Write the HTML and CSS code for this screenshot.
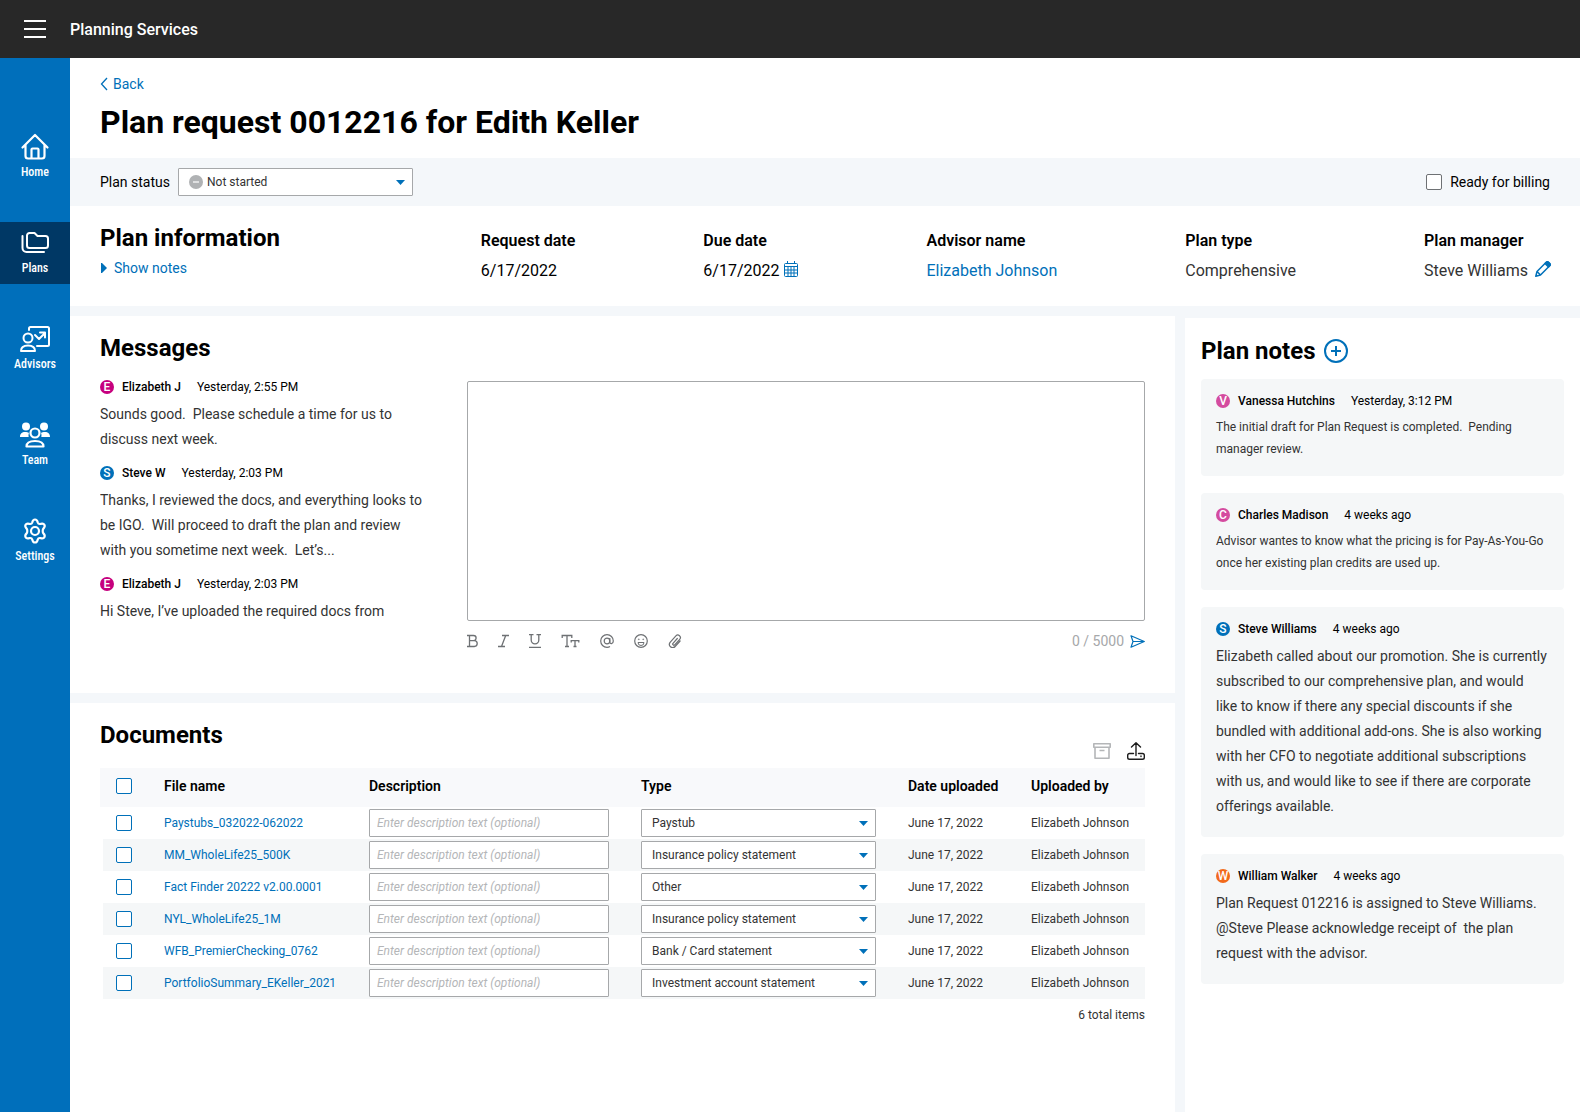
FILE: index.html
```html
<!DOCTYPE html>
<html lang="en">

<head>
  <meta charset="UTF-8" />
  <meta name="viewport" content="width=device-width, initial-scale=1.0" />
  <title>Planning Services</title>
  <link rel="stylesheet" href="styles.css">
</head>

<body>
  <header class="topbar">
    <button class="icon-btn menu-btn" type="button" aria-label="Menu">
      <svg width="22" height="18" viewBox="0 0 22 18" fill="none" stroke="#fff" stroke-width="2"><path d="M0 1h22M0 9h22M0 17h22" /></svg>
    </button>
    <span class="app-name">Planning Services</span>
  </header>

  <div class="shell">
    <nav class="sidebar">
      <a class="nav-item" href="#">
        <svg width="30" height="28" viewBox="0 0 30 28" fill="none" stroke="#fff" stroke-width="2.200" stroke-linecap="round" stroke-linejoin="round"><path d="M2.500 14.500L15 2l12.500 12.500M5.500 12v11a2.500 2.500 0 0 0 2.500 2.500h14a2.500 2.500 0 0 0 2.500-2.500V12M11.500 25.500v-9a1 1 0 0 1 1-1h5a1 1 0 0 1 1 1v9" /></svg>
        Home
      </a>
      <a class="nav-item active" href="#">
        <svg width="30" height="28" viewBox="0 0 30 28" fill="none" stroke="#fff" stroke-width="2" stroke-linecap="round" stroke-linejoin="round"><path d="M9.500 4h5l3 3h8a2.500 2.500 0 0 1 2.500 2.500v7a2.500 2.500 0 0 1-2.500 2.500h-16A2.500 2.500 0 0 1 7 16.500v-10A2.500 2.500 0 0 1 9.500 4zM2.500 7v12a4 4 0 0 0 4 4H24" /></svg>
        Plans
      </a>
      <a class="nav-item" href="#">
        <svg width="32" height="28" viewBox="0 0 32 28" fill="none" stroke="#fff" stroke-width="2" stroke-linecap="round" stroke-linejoin="round"><path d="M10 5V3.500A1.500 1.500 0 0 1 11.500 2h17A1.500 1.500 0 0 1 30 3.500v16a1.500 1.500 0 0 1-1.500 1.500H18M16 10l4 4 6-6M21 7.500h5v5" /><circle cx="9" cy="13" r="4.500" /><path d="M2 26c0-4 2.500-5.500 7-5.500s7 1.500 7 5.500z" /></svg>
        Advisors
      </a>
      <a class="nav-item" href="#">
        <svg width="32" height="28" viewBox="0 0 32 28" fill="none" stroke="#fff" stroke-width="2.200" stroke-linejoin="round"><g fill="#fff" stroke="none"><circle cx="7" cy="5.500" r="4" /><circle cx="25" cy="5.500" r="4" /><path d="M1 16c0-3.500 2-5 5-5 1.800 0 3 .3 4 1-.6 1.300-.6 2.700-.3 4zM31 16c0-3.500-2-5-5-5-1.800 0-3 .3-4 1 .6 1.300.6 2.700.3 4z" /></g><circle cx="16" cy="12" r="4.500" /><path d="M7.500 25.500c0-4 3-5.500 8.500-5.500s8.500 1.500 8.500 5.500z" /></svg>
        Team
      </a>
      <a class="nav-item" href="#">
        <svg width="28" height="28" viewBox="0 0 28 28" fill="none" stroke="#fff" stroke-width="2.200" stroke-linejoin="round"><circle cx="14" cy="14" r="4" /><path d="M11.300 5.300C11.800 3 12.500 2.500 14 2.500s2.200.5 2.700 2.800c.4 1.200 1.600 1.900 2.900 1.600 2.200-.7 3.100-.4 3.800.9s.7 2.100-1 3.800c-.9.900-.9 3.900 0 4.800 1.700 1.700 1.700 2.500 1 3.800s-1.600 1.600-3.800.9c-1.300-.3-2.500.4-2.900 1.600-.5 2.300-1.200 2.800-2.700 2.800s-2.200-.5-2.700-2.800c-.4-1.200-1.600-1.900-2.900-1.600-2.200.7-3.100.4-3.800-.9s-.7-2.100 1-3.800c.9-.9.9-3.900 0-4.800-1.700-1.700-1.700-2.500-1-3.800s1.600-1.600 3.800-.9c1.300.3 2.500-.4 2.900-1.600z" /></svg>
        Settings
      </a>
    </nav>

    <main class="main">
      <div class="page-head">
        <a class="back" href="#">
          <svg width="8" height="14" viewBox="0 0 8 14" fill="none" stroke="#0070b9" stroke-width="1.300"><path d="M7 1L1.500 7 7 13" /></svg>
          Back
        </a>
        <h1>Plan request 0012216 for Edith Keller</h1>
      </div>

      <div class="status-bar">
        <label for="plan-status">Plan status</label>
        <span class="select status-select">
          <svg class="status-icon" width="14" height="14" viewBox="0 0 14 14"><circle cx="7" cy="7" r="7" fill="#b0b2b4" /><path d="M4 7h6" stroke="#fff" stroke-width="1.200" /></svg>
          <select id="plan-status"><option>Not started</option></select>
        </span>
        <label class="billing"><input class="check check-dark" type="checkbox">Ready for billing</label>
      </div>

      <section class="plan-info">
        <div>
          <h2>Plan information</h2>
          <a class="show-notes" href="#">
            <svg width="6" height="10" viewBox="0 0 6 10"><path d="M0 0h1l5 5-5 5H0z" fill="#0070b9" /></svg>
            Show notes
          </a>
        </div>
        <dl class="fields">
          <div><dt>Request date</dt><dd>6/17/2022</dd></div>
          <div>
            <dt>Due date</dt>
            <dd>6/17/2022
              <button class="icon-btn field-btn" type="button" aria-label="Pick due date">
                <svg width="14" height="16" viewBox="0 0 14 16" fill="none" stroke="#0070b9"><path d="M1.500 2.500h11a1 1 0 0 1 1 1v11a1 1 0 0 1-1 1h-11a1 1 0 0 1-1-1v-11a1 1 0 0 1 1-1zM3.500 0v3M10.500 0v3M.5 5.500h13M.5 9h13M.5 12h13M4 5.500v10M7 5.500v10M10 5.500v10" /></svg>
              </button>
            </dd>
          </div>
          <div><dt>Advisor name</dt><dd><a href="#">Elizabeth Johnson</a></dd></div>
          <div><dt>Plan type</dt><dd class="soft">Comprehensive</dd></div>
          <div>
            <dt>Plan manager</dt>
            <dd class="soft">Steve Williams
              <button class="icon-btn field-btn pencil" type="button" aria-label="Edit plan manager">
                <svg width="16" height="16" viewBox="0 0 16 16" fill="none" stroke="#0070b9" stroke-width="1.500" stroke-linejoin="round"><path d="M.8 15.200l1.200-4.700L11.200 1.300a1.600 1.600 0 0 1 2.200 0l1.300 1.300a1.600 1.600 0 0 1 0 2.200L5.500 14zM2 10.500L5.500 14" /><path d="M10 2.500l1.700-1.500h1.500L15 2.800v1.500L13.500 6z" fill="#0070b9" /></svg>
              </button>
            </dd>
          </div>
        </dl>
      </section>

      <div class="columns">
        <div class="left-col">
          <section class="panel messages">
            <h2>Messages</h2>
            <div class="messages-body">
              <div class="message-list">
                <article class="message">
                  <div class="meta"><span class="avatar magenta">E</span><b>Elizabeth J</b><span>Yesterday, 2:55 PM</span></div>
                  <p>Sounds good.&nbsp; Please schedule a time for us to discuss next week.</p>
                </article>
                <article class="message">
                  <div class="meta"><span class="avatar blue">S</span><b>Steve W</b><span>Yesterday, 2:03 PM</span></div>
                  <p>Thanks, I reviewed the docs, and everything looks to be IGO.&nbsp; Will proceed to draft the plan and review with you sometime next week.&nbsp; Let’s...</p>
                </article>
                <article class="message">
                  <div class="meta"><span class="avatar magenta">E</span><b>Elizabeth J</b><span>Yesterday, 2:03 PM</span></div>
                  <p>Hi Steve, I’ve uploaded the required docs from</p>
                </article>
              </div>

              <div class="compose">
                <textarea aria-label="Message"></textarea>
                <div class="toolbar">
                  <button class="icon-btn" type="button" aria-label="Bold">
                    <svg width="11" height="14" viewBox="0 0 11 14" fill="none" stroke="#6e7174" stroke-width="1.300"><path d="M0 1.500h6.500a2.600 2.600 0 0 1 0 5.200H2.500M6.500 6.700h.8a2.900 2.900 0 0 1 0 5.800H0M2.500 1.500v11" /></svg>
                  </button>
                  <button class="icon-btn" type="button" aria-label="Italic">
                    <svg width="11" height="14" viewBox="0 0 11 14" fill="none" stroke="#6e7174" stroke-width="1.300"><path d="M4 1.500h7M0 12.500h7M7.700 1.500l-4.200 11" /></svg>
                  </button>
                  <button class="icon-btn" type="button" aria-label="Underline">
                    <svg width="12" height="14" viewBox="0 0 12 14" fill="none" stroke="#6e7174" stroke-width="1.300"><path d="M0 .7h4.500M7.500.7H12M2.200.7V6a3.800 3.800 0 0 0 7.600 0V.7M0 13.300h12" /></svg>
                  </button>
                  <button class="icon-btn" type="button" aria-label="Text size">
                    <svg width="19" height="14" viewBox="0 0 19 14" fill="none" stroke="#6e7174" stroke-width="1.300"><path d="M1.200 4V1.500h9.600V4M6 1.500v11M4 12.500h4M10.200 8.500V6.700h7.600v1.800M14 6.700v5.800M12.500 12.500h3" /></svg>
                  </button>
                  <button class="icon-btn" type="button" aria-label="Mention">
                    <svg width="14" height="14" viewBox="0 0 14 14" fill="none" stroke="#6e7174" stroke-width="1.200"><circle cx="7" cy="7" r="2.800" /><path d="M9.800 4v4.200c0 2 3.500 2 3.500-1.200A6.300 6.300 0 1 0 7 13.300c1.300 0 2-.2 3-.8" /></svg>
                  </button>
                  <button class="icon-btn" type="button" aria-label="Emoji">
                    <svg width="14" height="14" viewBox="0 0 14 14" fill="none" stroke="#6e7174" stroke-width="1.200"><circle cx="7" cy="7" r="6.300" /><path d="M4 8.500h6a3 3 0 0 1-6 0z" stroke-width="1" /><circle cx="4.800" cy="5.300" r=".6" fill="#6e7174" stroke-width=".3" /><circle cx="9.200" cy="5.300" r=".6" fill="#6e7174" stroke-width=".3" /></svg>
                  </button>
                  <button class="icon-btn" type="button" aria-label="Attach">
                    <svg width="14" height="14" viewBox="0 0 14 14" fill="none" stroke="#6e7174" stroke-width="1.200" stroke-linecap="round"><path d="M9.300 4.500L5 9.300a1.100 1.100 0 0 0 1.700 1.500l5-5.500a2.500 2.500 0 0 0-3.800-3.400L2.300 8.200a3.200 3.200 0 0 0 4.800 4.300l5-5.500" /></svg>
                  </button>
                  <span class="counter">0 / 5000</span>
                  <button class="icon-btn send" type="button" aria-label="Send">
                    <svg width="15" height="13" viewBox="0 0 15 13" fill="none" stroke="#0070b9" stroke-width="1.200" stroke-linejoin="round"><path d="M1 .8l13.300 5.700L1 12.200 3 6.500zM3 6.500h11" /></svg>
                  </button>
                </div>
              </div>
            </div>
          </section>

          <section class="panel documents">
            <div class="documents-head">
              <h2>Documents</h2>
              <div class="actions">
                <button class="icon-btn" type="button" aria-label="Archive" disabled>
                  <svg width="18" height="18" viewBox="0 0 18 18" fill="none" stroke="#b4b6b8" stroke-width="1.600" stroke-linejoin="round"><path d="M.8 1.800h16.400v3.400H.8zM2 5.200v11h14v-11M6.500 8.500h5" /></svg>
                </button>
                <button class="icon-btn" type="button" aria-label="Upload">
                  <svg width="18" height="18" viewBox="0 0 18 18" fill="none" stroke="#1c1c1c" stroke-width="1.400" stroke-linecap="round" stroke-linejoin="round"><path d="M9 13.500V.8M4.500 5L9 .8 13.500 5M6.500 11.500h-4a1.800 1.800 0 0 0-1.800 1.800v2.200a1.800 1.800 0 0 0 1.800 1.800h13a1.800 1.800 0 0 0 1.800-1.800v-2.200a1.800 1.800 0 0 0-1.800-1.800h-4M14 14v.5" /></svg>
                </button>
              </div>
            </div>

            <table>
              <colgroup>
                <col class="c-check"><col class="c-file"><col class="c-desc"><col class="c-type"><col class="c-date"><col class="c-by">
              </colgroup>
              <thead>
                <tr>
                  <th><input class="check" type="checkbox" aria-label="Select all files"></th>
                  <th>File name</th>
                  <th>Description</th>
                  <th>Type</th>
                  <th>Date uploaded</th>
                  <th>Uploaded by</th>
                </tr>
              </thead>
              <tbody>
                <tr>
                  <td><input class="check" type="checkbox" aria-label="Select Paystubs_032022-062022"></td>
                  <td><a href="#">Paystubs_032022-062022</a></td>
                  <td><input class="desc" type="text" aria-label="Description" placeholder="Enter description text (optional)"></td>
                  <td><span class="select"><select aria-label="Type"><option>Paystub</option></select></span></td>
                  <td>June 17, 2022</td>
                  <td>Elizabeth Johnson</td>
                </tr>
                <tr>
                  <td><input class="check" type="checkbox" aria-label="Select MM_WholeLife25_500K"></td>
                  <td><a href="#">MM_WholeLife25_500K</a></td>
                  <td><input class="desc" type="text" aria-label="Description" placeholder="Enter description text (optional)"></td>
                  <td><span class="select"><select aria-label="Type"><option>Insurance policy statement</option></select></span></td>
                  <td>June 17, 2022</td>
                  <td>Elizabeth Johnson</td>
                </tr>
                <tr>
                  <td><input class="check" type="checkbox" aria-label="Select Fact Finder 20222 v2.00.0001"></td>
                  <td><a href="#">Fact Finder 20222 v2.00.0001</a></td>
                  <td><input class="desc" type="text" aria-label="Description" placeholder="Enter description text (optional)"></td>
                  <td><span class="select"><select aria-label="Type"><option>Other</option></select></span></td>
                  <td>June 17, 2022</td>
                  <td>Elizabeth Johnson</td>
                </tr>
                <tr>
                  <td><input class="check" type="checkbox" aria-label="Select NYL_WholeLife25_1M"></td>
                  <td><a href="#">NYL_WholeLife25_1M</a></td>
                  <td><input class="desc" type="text" aria-label="Description" placeholder="Enter description text (optional)"></td>
                  <td><span class="select"><select aria-label="Type"><option>Insurance policy statement</option></select></span></td>
                  <td>June 17, 2022</td>
                  <td>Elizabeth Johnson</td>
                </tr>
                <tr>
                  <td><input class="check" type="checkbox" aria-label="Select WFB_PremierChecking_0762"></td>
                  <td><a href="#">WFB_PremierChecking_0762</a></td>
                  <td><input class="desc" type="text" aria-label="Description" placeholder="Enter description text (optional)"></td>
                  <td><span class="select"><select aria-label="Type"><option>Bank / Card statement</option></select></span></td>
                  <td>June 17, 2022</td>
                  <td>Elizabeth Johnson</td>
                </tr>
                <tr>
                  <td><input class="check" type="checkbox" aria-label="Select PortfolioSummary_EKeller_2021"></td>
                  <td><a href="#">PortfolioSummary_EKeller_2021</a></td>
                  <td><input class="desc" type="text" aria-label="Description" placeholder="Enter description text (optional)"></td>
                  <td><span class="select"><select aria-label="Type"><option>Investment account statement</option></select></span></td>
                  <td>June 17, 2022</td>
                  <td>Elizabeth Johnson</td>
                </tr>
              </tbody>
            </table>
            <p class="total">6 total items</p>
          </section>
        </div>

        <aside class="notes">
          <div class="notes-head">
            <h2>Plan notes</h2>
            <button class="icon-btn" type="button" aria-label="Add note">
              <svg width="24" height="24" viewBox="0 0 24 24" fill="none" stroke="#0070b9" stroke-width="2"><circle cx="12" cy="12" r="11" /><path d="M12 7v10M7 12h10" /></svg>
            </button>
          </div>
          <div class="note-list">
            <article class="note">
              <div class="meta"><span class="avatar pink">V</span><b>Vanessa Hutchins</b><span>Yesterday, 3:12 PM</span></div>
              <p>The initial draft for Plan Request is completed.&nbsp; Pending manager review.</p>
            </article>
            <article class="note">
              <div class="meta"><span class="avatar pink">C</span><b>Charles Madison</b><span>4 weeks ago</span></div>
              <p>Advisor wantes to know what the pricing is for Pay-As-You-Go once her existing plan credits are used up.</p>
            </article>
            <article class="note large">
              <div class="meta"><span class="avatar blue">S</span><b>Steve Williams</b><span>4 weeks ago</span></div>
              <p>Elizabeth called about our promotion. She is currently subscribed to our comprehensive plan, and would like to know if there any special discounts if she bundled with additional add-ons. She is also working with her CFO to negotiate additional subscriptions with us, and would like to see if there are corporate offerings available.</p>
            </article>
            <article class="note large">
              <div class="meta"><span class="avatar orange">W</span><b>William Walker</b><span>4 weeks ago</span></div>
              <p>Plan Request 012216 is assigned to Steve Williams. @Steve Please acknowledge receipt of&nbsp; the plan request with the advisor.</p>
            </article>
          </div>
        </aside>
      </div>
    </main>
  </div>
</body>

</html>
```

FILE: styles.css
```css
:root {
  --blue: #0070b9;
  --nav: #006fbb;
  --nav-active: #003865;
  --bar: #282828;
  --bg: #f4f7fa;
  --note: #f5f7f8;
  --text: #000;
  --soft: #333;
  --border: #a6a8aa;
}

* {
  margin: 0;
  padding: 0;
  box-sizing: border-box;
}

body {
  font-family: Roboto, "Liberation Sans", sans-serif;
  font-size: 14px;
  line-height: 20px;
  color: var(--text);
  background: #fff;
  display: flex;
  flex-direction: column;
  min-height: 100vh;
}

a {
  color: var(--blue);
  text-decoration: none;
}

a:hover {
  text-decoration: underline;
}

h1 {
  font-size: 32px;
  line-height: 40px;
  font-weight: 700;
}

h2 {
  font-size: 24px;
  line-height: 30px;
  font-weight: 700;
}

svg {
  display: block;
  flex-shrink: 0;
}

.icon-btn {
  display: inline-flex;
  border: 0;
  background: none;
  cursor: pointer;
}

/* top bar */

.topbar {
  display: flex;
  align-items: center;
  gap: 24px;
  height: 58px;
  padding: 0 24px;
  background: var(--bar);
  color: #fff;
}

.app-name {
  padding-top: 2px;
  font-size: 16px;
  font-weight: 500;
}

.shell {
  display: flex;
  flex: 1;
}

/* sidebar */

.sidebar {
  display: flex;
  flex-direction: column;
  gap: 34px;
  width: 70px;
  padding-top: 68px;
  background: var(--nav);
  flex-shrink: 0;
}

.nav-item {
  display: flex;
  flex-direction: column;
  align-items: center;
  gap: 3px;
  height: 62px;
  padding-top: 7px;
  color: #fff;
  font-family: "Roboto Condensed", Roboto, sans-serif;
  font-size: 12px;
  line-height: 16px;
  font-weight: 500;
}

.nav-item.active {
  background: var(--nav-active);
}

/* page head */

.main {
  flex: 1;
  min-width: 0;
  display: flex;
  flex-direction: column;
}

.page-head {
  padding: 16px 30px;
}

.back {
  display: inline-flex;
  align-items: center;
  gap: 5px;
  margin-bottom: 8px;
  vertical-align: top;
}

.status-bar {
  display: flex;
  align-items: center;
  gap: 8px;
  height: 48px;
  padding: 0 30px;
  background: var(--bg);
}

.billing {
  display: flex;
  align-items: center;
  gap: 8px;
  margin-left: auto;
}

.check {
  appearance: none;
  display: block;
  width: 16px;
  height: 16px;
  border: 1px solid var(--blue);
  border-radius: 2px;
  background: #fff;
}

.check:checked {
  background: var(--blue);
}

.check-dark {
  border-color: #6e7174;
}

.select {
  position: relative;
  display: block;
  width: 235px;
}

.select::after {
  content: "";
  position: absolute;
  right: 8px;
  top: 12px;
  width: 9px;
  height: 5px;
  background: var(--blue);
  clip-path: polygon(0 0, 100% 0, 50% 100%);
  pointer-events: none;
}

select,
.desc {
  appearance: none;
  display: block;
  width: 100%;
  height: 28px;
  padding: 0 10px;
  border: 1px solid var(--border);
  border-radius: 1px;
  background: #fff;
  color: var(--soft);
  font: 12px Roboto, "Liberation Sans", sans-serif;
}

.status-select select {
  padding-left: 28px;
}

.status-icon {
  position: absolute;
  left: 11px;
  top: 7px;
}

/* plan information */

.plan-info {
  display: flex;
  justify-content: space-between;
  padding: 17px 29px 25px 30px;
}

.show-notes {
  display: flex;
  align-items: center;
  gap: 7px;
  margin-top: 5px;
  padding-left: 1px;
}

.fields {
  display: flex;
  gap: 128px;
  padding-top: 8px;
  font-size: 16px;
  white-space: nowrap;
}

.fields dt {
  font-weight: 600;
  margin-bottom: 10px;
}

.fields dd {
  display: flex;
  align-items: center;
  gap: 5px;
}

.field-btn {
  padding-bottom: 4px;
}

.fields .pencil {
  margin-left: 2px;
}

.soft {
  color: var(--soft);
}

/* columns */

.columns {
  flex: 1;
  display: grid;
  grid-template-columns: minmax(0, 1fr) 395px;
  gap: 10px;
  padding-top: 10px;
  background: var(--bg);
}

.left-col {
  display: flex;
  flex-direction: column;
  gap: 10px;
}

.panel {
  background: #fff;
  padding: 17px 30px 0;
}

.messages {
  padding-bottom: 42px;
}

.messages-body {
  display: grid;
  grid-template-columns: 330px minmax(0, 1fr);
  gap: 37px;
  margin-top: 14px;
}

.message-list {
  display: flex;
  flex-direction: column;
  gap: 11px;
  height: 248px;
  overflow: hidden;
}

.message {
  flex-shrink: 0;
}

.message p {
  margin-top: 5px;
  line-height: 25px;
  color: var(--soft);
}

.meta {
  display: flex;
  align-items: center;
  font-size: 12px;
}

.meta b {
  font-weight: 500;
  margin: 0 16px 0 8px;
}

.avatar {
  width: 14px;
  height: 14px;
  border-radius: 50%;
  color: #fff;
  font-size: 12px;
  line-height: 14px;
  font-weight: 500;
  text-align: center;
}

.magenta {
  background: #c6007e;
}

.pink {
  background: #d44b9f;
}

.blue {
  background: var(--blue);
}

.orange {
  background: #f26a1b;
}

.compose {
  padding-top: 4px;
}

textarea {
  display: block;
  width: 100%;
  height: 240px;
  padding: 10px;
  border: 1px solid var(--border);
  border-radius: 2px;
  resize: none;
  font: 14px Roboto, sans-serif;
}

.toolbar {
  display: flex;
  align-items: center;
  gap: 20px;
  height: 20px;
  margin-top: 10px;
}

.counter {
  margin-left: auto;
  color: #a6a8aa;
}

.send {
  margin-left: -14px;
}

/* documents */

.documents {
  flex: 1;
  padding-bottom: 30px;
}

.documents-head {
  display: flex;
  justify-content: space-between;
  height: 40px;
  margin-bottom: 8px;
}

.actions {
  display: flex;
  align-items: flex-end;
  gap: 16px;
}

table {
  width: 100%;
  table-layout: fixed;
  border-collapse: collapse;
}

.c-check {
  width: 64px;
}

.c-desc {
  width: 272px;
}

.c-type {
  width: 267px;
}

.c-date {
  width: 123px;
}

.c-by {
  width: 114px;
}

th {
  height: 39px;
  padding-bottom: 3px;
  text-align: left;
  font-weight: 600;
  background: #f8f9fb;
}

td {
  height: 32px;
  font-size: 12px;
  line-height: 16px;
  color: var(--soft);
}

th:first-child,
td:first-child {
  padding-left: 16px;
}

tbody tr:nth-child(even) td {
  background: var(--note);
}

/* stripes start a little inside the header row */
tbody tr:nth-child(even) td:first-child {
  background: linear-gradient(90deg, #fff 3px, var(--note) 3px);
}

.desc {
  width: 240px;
  padding: 0 7px;
}

.desc::placeholder {
  color: #b4b6b8;
  font-style: italic;
}

.total {
  margin-top: 6px;
  font-size: 12px;
  text-align: right;
  color: var(--soft);
}

/* plan notes */

.notes {
  margin-top: 2px;
  padding: 18px 16px;
  background: #fff;
}

.notes-head {
  display: flex;
  align-items: center;
  gap: 8px;
  margin-bottom: 13px;
}

.note-list {
  display: flex;
  flex-direction: column;
  gap: 17px;
}

.note {
  padding: 12px 16px 16px 15px;
  border-radius: 4px;
  background: var(--note);
}

.note p {
  margin-top: 5px;
  font-size: 12px;
  line-height: 22px;
  color: var(--soft);
}

.note.large {
  padding-bottom: 18px;
}

.note.large p {
  font-size: 14px;
  line-height: 25px;
}
```
